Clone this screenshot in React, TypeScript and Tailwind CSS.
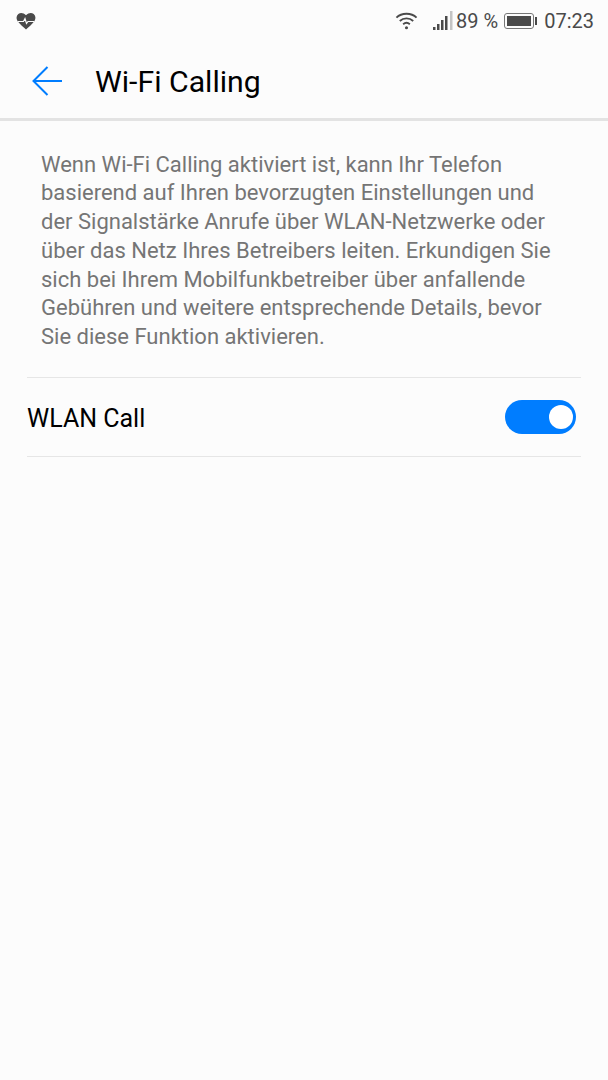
export default function App() {
  return (
    <div className="h-[1080px] w-[608px] overflow-hidden bg-[#fcfcfc] font-['Roboto',sans-serif]">
      {/* status bar */}
      <div className="flex h-10 items-center justify-between pl-[16px] pr-[14px] pt-[1px] text-[#4a4a4a]">
        <svg width="20" height="18" viewBox="0 0 20 18">
          <path
            d="M10 17.5 C8 15.5 3.5 12 1.5 9 C0 6.5 0.3 3.5 2.3 2 C4.5 0.4 7.5 0.8 10 3.2 C12.5 0.8 15.5 0.4 17.7 2 C19.7 3.5 20 6.5 18.5 9 C16.5 12 12 15.5 10 17.5 Z"
            fill="#4a4a4a"
          />
          <path d="M2 9.5 H7.5 L9 6.5 L10.5 11.5 L12 9.5 H18" fill="none" stroke="#fcfcfc" strokeWidth="1.2" />
        </svg>
        <div className="flex items-center">
          <svg width="23" height="19" viewBox="0 0 24 19" fill="none" stroke="#4a4a4a" strokeWidth="2">
            <path d="M1.5 6.5 C7 1.2 17 1.2 22.5 6.5" />
            <path d="M5 10 C9 6.4 15 6.4 19 10" />
            <path d="M8.5 13.3 C10.7 11.5 13.3 11.5 15.5 13.3" />
            <circle cx="12" cy="17" r="1.6" fill="#4a4a4a" stroke="none" />
          </svg>
          <svg className="ml-[15px]" width="20" height="19" viewBox="0 0 20 19">
            <rect x="0" y="16" width="2.5" height="3" fill="#4a4a4a" />
            <rect x="4" y="13" width="2.5" height="6" fill="#4a4a4a" />
            <rect x="8" y="9" width="2.5" height="10" fill="#4a4a4a" />
            <rect x="12" y="5" width="2.5" height="14" fill="#4a4a4a" />
            <rect x="17" y="0" width="2.5" height="19" fill="#c4c4c4" />
          </svg>
          <span className="ml-[3px] text-[20px] leading-none">89 %</span>
          <div className="ml-[6px] flex items-center">
            <div className="h-[16px] w-[30px] rounded-[3px] border border-[#777] p-[2px]">
              <div className="h-full w-full bg-[#4a4a4a]" />
            </div>
            <div className="ml-[1px] h-[8px] w-[2px] bg-[#4a4a4a]" />
          </div>
          <span className="ml-[7px] text-[20px] leading-none">07:23</span>
        </div>
      </div>

      {/* toolbar */}
      <div className="flex h-[81px] items-center border-b-[3px] border-[#e3e3e3] pl-[32px] pt-[4px]">
        <svg width="30" height="30" viewBox="0 0 30 30" fill="none" stroke="#007dff" strokeWidth="2">
          <path d="M30 15 H1" />
          <path d="M15.5 1 L1.5 15 L15.5 29" />
        </svg>
        <h1 className="ml-[33px] pt-[2px] text-[30.2px] leading-none text-black">Wi-Fi Calling</h1>
      </div>

      {/* description */}
      <p className="px-[41px] pt-[29.5px] text-[22px] leading-[28.8px] text-[#757575]">
        Wenn Wi-Fi Calling aktiviert ist, kann Ihr Telefon
        <br />
        basierend auf Ihren bevorzugten Einstellungen und
        <br />
        der Signalstärke Anrufe über WLAN-Netzwerke oder
        <br />
        über das Netz Ihres Betreibers leiten. Erkundigen Sie
        <br />
        sich bei Ihrem Mobilfunkbetreiber über anfallende
        <br />
        Gebühren und weitere entsprechende Details, bevor
        <br />
        Sie diese Funktion aktivieren.
      </p>

      {/* WLAN Call row */}
      <div className="mx-[27px] mt-[25px] flex h-[80px] items-center justify-between border-y border-[#e6e6e6] pr-[5px]">
        <span className="pt-[2px] text-[25px] leading-none text-black">WLAN Call</span>
        <div className="flex h-[34px] w-[71px] items-center justify-end rounded-full bg-[#007dff] pr-[3px]">
          <div className="h-[24px] w-[24px] rounded-full bg-white" />
        </div>
      </div>
    </div>
  );
}
